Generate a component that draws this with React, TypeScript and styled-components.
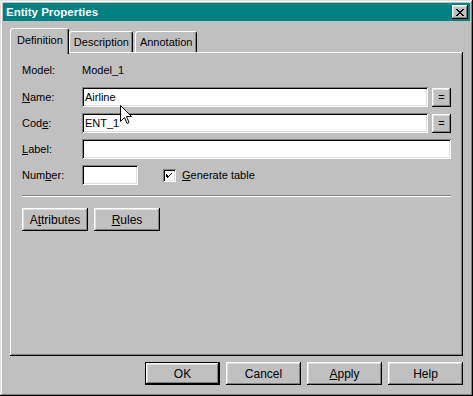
import React from "react";
import styled, { createGlobalStyle } from "styled-components";

const Global = createGlobalStyle`
  html, body { margin: 0; padding: 0; background: #c0c0c0; }
  body { font-family: "Liberation Sans", Arial, sans-serif; font-size: 11px; color: #000; }
  * { box-sizing: border-box; }
`;

const Window = styled.div`
  position: relative;
  width: 473px;
  height: 396px;
  background: #c0c0c0;
  padding: 3px;
  display: flex;
  flex-direction: column;
  box-shadow: inset -1px -1px #000, inset 1px 1px #dfdfdf, inset -2px -2px #808080, inset 2px 2px #fff;
`;

const TitleBar = styled.div`
  height: 18px;
  background: #008080;
  display: flex;
  align-items: center;
  justify-content: space-between;
  padding: 0 2px 0 3px;
`;

const Title = styled.span`
  color: #fff;
  font-weight: bold;
  font-size: 11.5px;
`;

const CloseButton = styled.div`
  width: 16px;
  height: 14px;
  background: #c0c0c0;
  box-shadow: inset -1px -1px #000, inset 1px 1px #fff, inset -2px -2px #808080, inset 2px 2px #dfdfdf;
  display: flex;
  align-items: center;
  justify-content: center;
`;

const Body = styled.div`
  flex: 1;
  display: flex;
  flex-direction: column;
  padding: 7px 7px 0 7px;
`;

const TabStrip = styled.div`
  display: flex;
  align-items: flex-end;
  height: 24px;
  position: relative;
  z-index: 2;
`;

const Tab = styled.div<{ $active?: boolean; $gap?: number }>`
  height: ${(p) => (p.$active ? "26px" : "21px")};
  margin-bottom: ${(p) => (p.$active ? "-2px" : "0")};
  padding: ${(p) => (p.$active ? "0 5px 4px 6px" : "0 3px 0 4px")};
  margin-right: ${(p) => p.$gap ?? 0}px;
  display: flex;
  align-items: center;
  background: #c0c0c0;
  border-top: 1px solid #fff;
  border-left: 1px solid #fff;
  border-right: 1px solid #000;
  border-radius: 3px 3px 0 0;
  box-shadow: inset -1px 0 #808080;
  white-space: nowrap;
`;

const Panel = styled.div`
  height: 304px;
  padding: 8px 12px 0 12px;
  box-shadow: inset -1px -1px #000, inset 1px 1px #fff, inset -2px -2px #808080;
  display: flex;
  flex-direction: column;
`;

const Form = styled.div`
  display: flex;
  flex-direction: column;
  gap: 6px;
`;

const Row = styled.div<{ $first?: boolean }>`
  display: flex;
  align-items: center;
  height: 20px;
  margin-bottom: ${(p) => (p.$first ? "1px" : "0")};
`;

const Label = styled.span`
  width: 60px;
  flex: none;
`;

const Value = styled.span``;

const TextBox = styled.div<{ $width?: number }>`
  height: 20px;
  background: #fff;
  flex: ${(p) => (p.$width ? "none" : "1")};
  width: ${(p) => (p.$width ? `${p.$width}px` : "auto")};
  box-shadow: inset 1px 1px #808080, inset -1px -1px #fff, inset 2px 2px #000, inset -2px -2px #dfdfdf;
  display: flex;
  align-items: center;
  padding-left: 3px;
  font-size: 11px;
`;

const EqButton = styled.div`
  width: 19px;
  height: 19px;
  margin-left: 4px;
  flex: none;
  box-shadow: inset -1px -1px #000, inset 1px 1px #fff, inset -2px -2px #808080, inset 2px 2px #dfdfdf;
  display: flex;
  align-items: center;
  justify-content: center;
  font-size: 11px;
`;

const CheckWrap = styled.div`
  display: flex;
  align-items: center;
  margin-left: 25px;
  gap: 6px;
`;

const CheckBox = styled.div`
  width: 13px;
  height: 13px;
  background: #fff;
  box-shadow: inset 1px 1px #808080, inset -1px -1px #fff, inset 2px 2px #000, inset -2px -2px #dfdfdf;
  display: flex;
  align-items: center;
  justify-content: center;
`;

const Separator = styled.div`
  height: 2px;
  margin-top: 10px;
  border-top: 1px solid #808080;
  border-bottom: 1px solid #fff;
`;

const ButtonRow = styled.div`
  display: flex;
  gap: 6px;
  margin-top: 11px;
`;

const Button = styled.div<{ $w: number; $default?: boolean }>`
  width: ${(p) => p.$w}px;
  height: 23px;
  display: flex;
  align-items: center;
  justify-content: center;
  background: #c0c0c0;
  border: ${(p) => (p.$default ? "1px solid #000" : "none")};
  box-shadow: inset -1px -1px #000, inset 1px 1px #fff, inset -2px -2px #808080, inset 2px 2px #dfdfdf;
  font-size: 12px;
`;

const Footer = styled.div`
  display: flex;
  justify-content: flex-end;
  gap: 6px;
  margin-top: 6px;
`;

const Cursor = styled.svg`
  position: absolute;
  left: 120px;
  top: 105px;
  z-index: 5;
`;

export default function App() {
  return (
    <>
      <Global />
      <Window>
        <TitleBar>
          <Title>Entity Properties</Title>
          <CloseButton>
            <svg width="8" height="7" viewBox="0 0 8 7">
              <path d="M0 0h2v1h1v1h2V1h1V0h2v1H7v1H6v1H5v1h1v1h1v1h1v1H6V6H5V5H3v1H2v1H0V6h1V5h1V4h1V3H2V2H1V1H0z" fill="#000" />
            </svg>
          </CloseButton>
        </TitleBar>
        <Body>
          <TabStrip>
            <Tab $active>Definition</Tab>
            <Tab $gap={2}>Description</Tab>
            <Tab>Annotation</Tab>
          </TabStrip>
          <Panel>
            <Form>
              <Row $first>
                <Label>Model:</Label>
                <Value>Model_1</Value>
              </Row>
              <Row>
                <Label><u>N</u>ame:</Label>
                <TextBox>Airline</TextBox>
                <EqButton>=</EqButton>
              </Row>
              <Row>
                <Label>Cod<u>e</u>:</Label>
                <TextBox>ENT_1</TextBox>
                <EqButton>=</EqButton>
              </Row>
              <Row>
                <Label><u>L</u>abel:</Label>
                <TextBox />
              </Row>
              <Row>
                <Label>Num<u>b</u>er:</Label>
                <TextBox $width={56} />
                <CheckWrap>
                  <CheckBox>
                    <svg width="7" height="7" viewBox="0 0 7 7">
                      <path d="M6 0v2H5v1H4v1H3v1H2v1H1V5H0V2h1v1h1v1h1V3h1V2h1V1h1z" fill="#000" />
                    </svg>
                  </CheckBox>
                  <span><u>G</u>enerate table</span>
                </CheckWrap>
              </Row>
            </Form>
            <Separator />
            <ButtonRow>
              <Button $w={66}>A<u>t</u>tributes</Button>
              <Button $w={66}><u>R</u>ules</Button>
            </ButtonRow>
          </Panel>
          <Footer>
            <Button $w={75} $default>OK</Button>
            <Button $w={75}>Cancel</Button>
            <Button $w={75}><u>A</u>pply</Button>
            <Button $w={75}>Help</Button>
          </Footer>
        </Body>
        <Cursor width="12" height="19" viewBox="0 0 12 19">
          <path d="M0.5 0.5 L0.5 16.5 L4.5 12.5 L7 18.5 L9 17.5 L6.5 11.5 L11.5 11.5 Z" fill="#fff" stroke="#000" strokeWidth="1" />
        </Cursor>
      </Window>
    </>
  );
}
